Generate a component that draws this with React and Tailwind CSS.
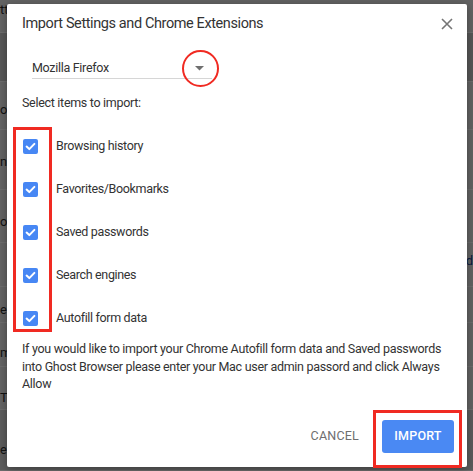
import React from "react";

const rows = [
  { h: 33, bg: "bg-[#636363]", t: "tt", ty: 10 },
  { h: 49, bg: "bg-[#575757]", t: "", ty: 0 },
  { h: 48, bg: "bg-[#636363]", t: "o S", ty: 28 },
  { h: 60, bg: "bg-[#636363]", t: "ne", ty: 32 },
  { h: 53, bg: "bg-[#636363]", t: "ok", ty: 32 },
  { h: 44, bg: "bg-[#636363]", t: "", ty: 0, r: "d" },
  { h: 36, bg: "bg-[#636363]", t: "e", ty: 23 },
  { h: 44, bg: "bg-[#636363]", t: "m", ty: 30 },
  { h: 43, bg: "bg-[#636363]", t: "Ta", ty: 31 },
  { h: 61, bg: "bg-[#5c5c5c]", t: "e", ty: 40 },
];

function Check({ label }) {
  return (
    <div className="flex items-center h-[20px] ml-[1px]">
      <div className="w-[15px] h-[15px] rounded-[2px] bg-[#4787f4] flex items-center justify-center">
        <svg width="15" height="15" viewBox="0 0 15 15">
          <path d="M3.6 7.6 L6.3 10.1 L11.4 4.9" fill="none" stroke="white" strokeWidth="2" strokeLinecap="round" strokeLinejoin="round" />
        </svg>
      </div>
      <span className="ml-[18px] text-[12.5px] tracking-[-0.35px] text-[#333333]">{label}</span>
    </div>
  );
}

export default function App() {
  const items = [
    "Browsing history",
    "Favorites/Bookmarks",
    "Saved passwords",
    "Search engines",
    "Autofill form data",
  ];
  return (
    <div className="relative w-[473px] h-[471px] overflow-hidden bg-[#636363] font-['Roboto',sans-serif]">
      {/* dimmed page behind */}
      <div className="flex flex-col">
        {rows.map((r, i) => (
          <div
            key={i}
            className={`relative ${r.bg} border-b border-[#6c6c6c] text-[13px] text-[#111111] flex justify-between`}
            style={{ height: r.h }}
          >
            <span style={{ marginTop: r.ty - 8 }} className="leading-[16px]">{r.t}</span>
            <span style={{ marginTop: 10 }} className="leading-[16px] text-[#0b1a40]">{r.r || ""}</span>
          </div>
        ))}
      </div>

      {/* dialog */}
      <div className="absolute left-[7px] top-[4px] w-[460px] h-[463px] bg-white rounded-[2px] shadow-[0_2px_8px_rgba(0,0,0,0.35)] px-[15px] pt-[10px] flex flex-col">
        <div className="flex items-center justify-between h-[20px]">
          <span className="text-[14.5px] text-[#333333] tracking-[-0.4px]">Import Settings and Chrome Extensions</span>
          <svg width="12" height="12" viewBox="0 0 12 12" className="mr-[-1px]">
            <path d="M1 1 L11 11 M11 1 L1 11" stroke="#757575" strokeWidth="1.6" />
          </svg>
        </div>

        <div className="mt-[24px] ml-[10px] w-[180px] h-[21px] border-b border-[#d6d6d6] flex items-center justify-between">
          <span className="text-[12.5px] tracking-[-0.3px] text-[#333333] leading-[20px]">Mozilla Firefox</span>
          <svg width="9" height="5" viewBox="0 0 9 5" className="mr-[8px]">
            <path d="M0 0 L9 0 L4.5 4.5 Z" fill="#6f6f6f" />
          </svg>
        </div>

        <div className="mt-[14px] h-[20px] leading-[20px] text-[12.5px] tracking-[-0.3px] text-[#333333]">Select items to import:</div>

        <div className="mt-[23px] flex flex-col gap-[23px]">
          {items.map((t) => (
            <Check key={t} label={t} />
          ))}
        </div>

        <p className="mt-[12px] text-[12.5px] leading-[17.5px] tracking-[-0.3px] text-[#333333] pr-[2px]">
          If you would like to import your Chrome Autofill form data and Saved passwords into Ghost Browser please enter your Mac user admin passord and click Always Allow
        </p>

        <div className="mt-[27px] flex items-center justify-end mr-[-2px]">
          <span className="text-[12.5px] text-[#6e6e6e] tracking-[0.2px] mr-[23px]">CANCEL</span>
          <div className="w-[72px] h-[33px] rounded-[3px] bg-[#4a89f3] flex items-center justify-center text-white text-[12.5px] font-medium tracking-[0.2px]">
            IMPORT
          </div>
        </div>
      </div>

      {/* red annotations */}
      <div className="absolute left-[182px] top-[50px] w-[37px] h-[37px] rounded-full border-[2.5px] border-[#f02a22]" />
      <div className="absolute left-[13px] top-[127px] w-[39px] h-[205px] border-[3px] border-[#f02a22]" />
      <div className="absolute left-[373px] top-[410px] w-[89px] h-[58px] border-[3px] border-[#f02a22]" />
    </div>
  );
}
